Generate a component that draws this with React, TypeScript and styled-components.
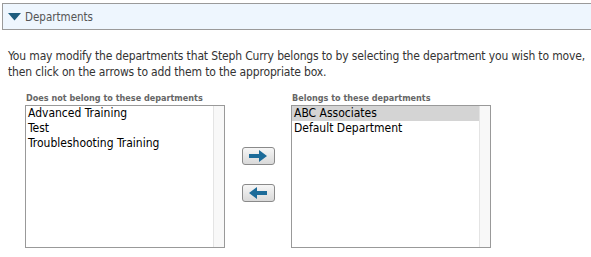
import React from "react";
import styled, { createGlobalStyle } from "styled-components";

const GlobalStyle = createGlobalStyle`
  html, body {
    margin: 0;
    padding: 0;
    background: #ffffff;
    overflow: hidden;
  }
  body {
    font-family: "DejaVu Sans Condensed", "DejaVu Sans", sans-serif;
    font-stretch: condensed;
    color: #333;
  }
`;

const Page = styled.div`
  width: 591px;
  height: 257px;
  padding-top: 3px;
  box-sizing: border-box;
`;

const SectionHeader = styled.div`
  margin-left: 2px;
  height: 25px;
  display: flex;
  align-items: center;
  gap: 4px;
  padding-left: 5px;
  background: #eef6fe;
  border: 1px solid #9a9a9a;
  border-right: none;
`;

const Title = styled.span`
  font-size: 11.5px;
  color: #555;
`;

const Intro = styled.p`
  margin: 18px 0 0 8px;
  font-size: 12px;
  line-height: 16px;
  letter-spacing: -0.15px;
  color: #333;
`;

const Transfer = styled.div`
  display: flex;
  align-items: flex-start;
  margin: 12px 0 0 25px;
`;

const Column = styled.div`
  display: flex;
  flex-direction: column;
  width: 200px;
`;

const ListLabel = styled.label`
  font-size: 9px;
  font-weight: bold;
  color: #666;
  line-height: 13px;
  padding-left: 1px;
`;

const ListBox = styled.div`
  display: flex;
  height: 141px;
  border: 1px solid #999;
  background: #fff;
`;

const Items = styled.ul`
  flex: 1;
  margin: 0;
  padding: 0;
  list-style: none;
`;

const Option = styled.li<{ selected?: boolean }>`
  font-size: 12px;
  line-height: 15px;
  padding-left: 2px;
  color: #000;
  background: ${p => (p.selected ? "#d4d4d4" : "transparent")};
`;

const Track = styled.div`
  width: 10px;
  background: #f8f8f8;
  border-left: 1px solid #e4e4e4;
`;

const Controls = styled.div`
  width: 66px;
  display: flex;
  flex-direction: column;
  align-items: center;
  gap: 19px;
  padding-top: 55px;
`;

const ArrowButton = styled.button`
  width: 33px;
  height: 18px;
  padding: 0;
  display: flex;
  align-items: center;
  justify-content: center;
  border: 1px solid #8a8a8a;
  border-radius: 3px;
  background: linear-gradient(#f6f6f6, #d9d9d9);
  cursor: pointer;
`;

function Caret() {
  return (
    <svg width="13" height="8" viewBox="0 0 13 8">
      <polygon points="0,0 13,0 6.5,7.5" fill="#1d5d7f" />
    </svg>
  );
}

function Arrow({ dir }: { dir: "left" | "right" }) {
  return (
    <svg
      width="20"
      height="12"
      viewBox="0 0 20 12"
      style={{ transform: dir === "left" ? "scaleX(-1)" : undefined }}
    >
      <polygon points="1,4 11,4 11,0 19,6 11,12 11,8 1,8" fill="#1c6b99" />
    </svg>
  );
}

function DeptList({
  label,
  items,
  selected,
}: {
  label: string;
  items: string[];
  selected?: string;
}) {
  return (
    <Column>
      <ListLabel>{label}</ListLabel>
      <ListBox>
        <Items>
          {items.map(i => (
            <Option key={i} selected={i === selected}>
              {i}
            </Option>
          ))}
        </Items>
        <Track />
      </ListBox>
    </Column>
  );
}

export default function App() {
  return (
    <Page>
      <GlobalStyle />
      <SectionHeader>
        <Caret />
        <Title>Departments</Title>
      </SectionHeader>
      <Intro>
        You may modify the departments that Steph Curry belongs to by selecting
        the department you wish to move, then click on the arrows to add them
        to the appropriate box.
      </Intro>
      <Transfer>
        <DeptList
          label="Does not belong to these departments"
          items={["Advanced Training", "Test", "Troubleshooting Training"]}
        />
        <Controls>
          <ArrowButton>
            <Arrow dir="right" />
          </ArrowButton>
          <ArrowButton>
            <Arrow dir="left" />
          </ArrowButton>
        </Controls>
        <DeptList
          label="Belongs to these departments"
          items={["ABC Associates", "Default Department"]}
          selected="ABC Associates"
        />
      </Transfer>
    </Page>
  );
}
